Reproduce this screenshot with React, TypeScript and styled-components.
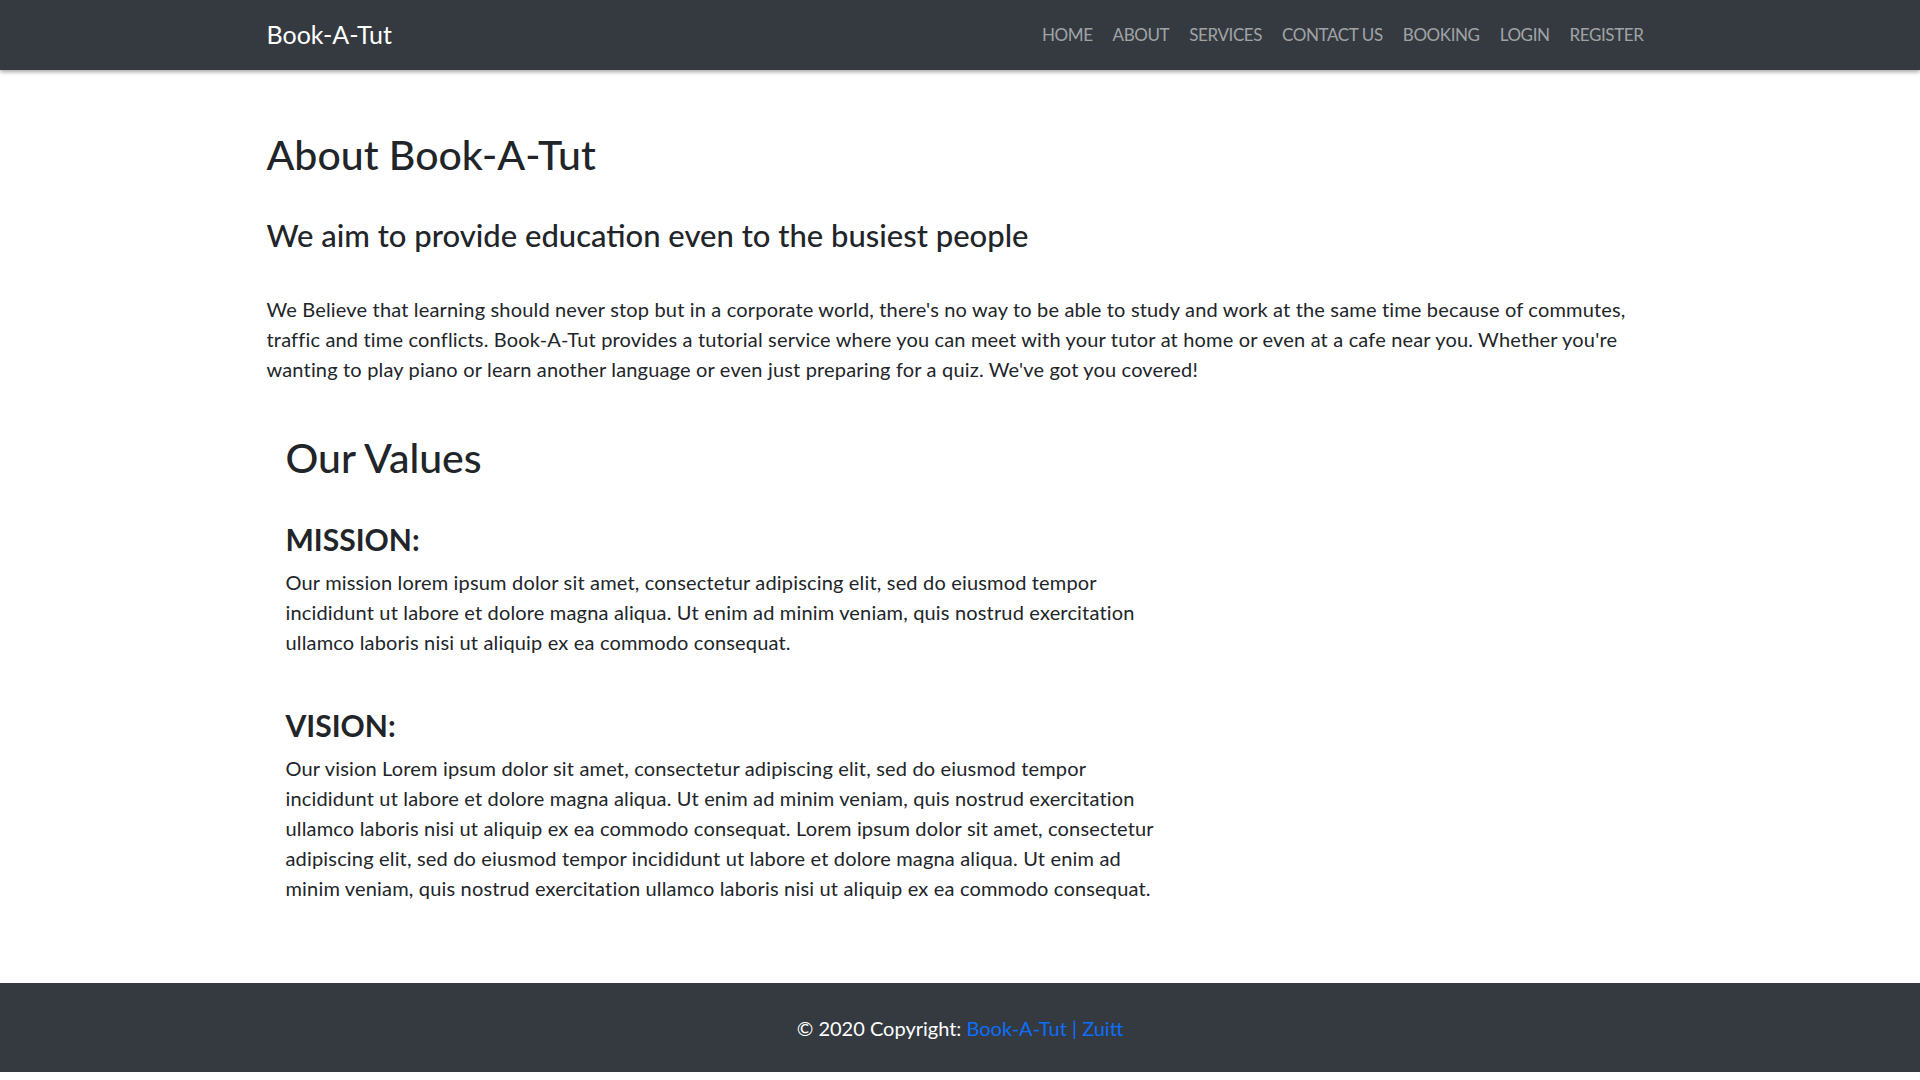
import { FC } from "react";
import styled, { createGlobalStyle } from "styled-components";

const GlobalStyle = createGlobalStyle`
  * {
    box-sizing: border-box;
  }

  body {
    margin: 0;
    background: #fff;
    color: #212529;
    font-family: Lato, "Open Sans", sans-serif;
    font-size: 20px;
    line-height: 1.5;
  }
`;

const Container = styled.div`
  width: 1387px;
  margin: 0 auto;
`;

const Navbar = styled.nav`
  height: 70px;
  background: #343a40;
  box-shadow: 0 2px 4px rgba(0, 0, 0, 0.35);
`;

const NavInner = styled(Container)`
  height: 100%;
  display: flex;
  align-items: center;
  justify-content: space-between;
`;

const Brand = styled.a`
  color: #fff;
  font-size: 25px;
  text-decoration: none;
`;

const NavList = styled.ul`
  display: flex;
  list-style: none;
  margin: 0;
  padding: 0;
`;

const NavLink = styled.a`
  display: block;
  padding: 0 10px;
  color: rgba(255, 255, 255, 0.55);
  font-size: 17px;
  letter-spacing: -0.4px;
  text-decoration: none;
  text-transform: uppercase;
`;

const Main = styled(Container)`
  padding: 61px 0 80px;
`;

const Title = styled.h1`
  margin: 0 0 38px;
  font-size: 41px;
  font-weight: 500;
  line-height: 48px;
`;

const Subtitle = styled.h4`
  margin: 0 0 41px;
  font-size: 31px;
  font-weight: 500;
  line-height: 36px;
`;

const Text = styled.p`
  margin: 0;
  line-height: 30px;
  letter-spacing: 0.17px;
`;

const Values = styled.section`
  width: 897px;
  margin-top: 50px;
  padding-left: 19px;
`;

const ValuesTitle = styled.h2`
  margin: 0 0 39px;
  font-size: 41px;
  font-weight: 500;
  line-height: 48px;
`;

const Value = styled.div`
  & + & {
    margin-top: 50px;
  }
`;

const ValueTitle = styled.h4`
  margin: 0 0 10px;
  font-size: 30px;
  font-weight: 700;
  line-height: 36px;
`;

const Footer = styled.footer`
  height: 89px;
  margin-bottom: 7px;
  display: flex;
  align-items: center;
  justify-content: center;
  background: #343a40;
  color: #fff;
`;

const FooterLink = styled.a`
  color: #0d6efd;
  text-decoration: none;
`;

const links = ["Home", "About", "Services", "Contact Us", "Booking", "Login", "Register"];

const values = [
  {
    title: "MISSION:",
    text: "Our mission lorem ipsum dolor sit amet, consectetur adipiscing elit, sed do eiusmod tempor incididunt ut labore et dolore magna aliqua. Ut enim ad minim veniam, quis nostrud exercitation ullamco laboris nisi ut aliquip ex ea commodo consequat.",
  },
  {
    title: "VISION:",
    text: "Our vision Lorem ipsum dolor sit amet, consectetur adipiscing elit, sed do eiusmod tempor incididunt ut labore et dolore magna aliqua. Ut enim ad minim veniam, quis nostrud exercitation ullamco laboris nisi ut aliquip ex ea commodo consequat. Lorem ipsum dolor sit amet, consectetur adipiscing elit, sed do eiusmod tempor incididunt ut labore et dolore magna aliqua. Ut enim ad minim veniam, quis nostrud exercitation ullamco laboris nisi ut aliquip ex ea commodo consequat.",
  },
];

const App: FC = () => {
  return (
    <>
      <GlobalStyle />
      <Navbar>
        <NavInner>
          <Brand href="#">Book-A-Tut</Brand>
          <NavList>
            {links.map((link) => (
              <li key={link}>
                <NavLink href="#">{link}</NavLink>
              </li>
            ))}
          </NavList>
        </NavInner>
      </Navbar>
      <Main>
        <Title>About Book-A-Tut</Title>
        <Subtitle>We aim to provide education even to the busiest people</Subtitle>
        <Text>
          We Believe that learning should never stop but in a corporate world, there's no way to be able to
          study and work at the same time because of commutes, traffic and time conflicts. Book-A-Tut provides a
          tutorial service where you can meet with your tutor at home or even at a cafe near you. Whether you're
          wanting to play piano or learn another language or even just preparing for a quiz. We've got you
          covered!
        </Text>
        <Values>
          <ValuesTitle>Our Values</ValuesTitle>
          {values.map((value) => (
            <Value key={value.title}>
              <ValueTitle>{value.title}</ValueTitle>
              <Text>{value.text}</Text>
            </Value>
          ))}
        </Values>
      </Main>
      <Footer>
        <span>
          © 2020 Copyright: <FooterLink href="#">Book-A-Tut | Zuitt</FooterLink>
        </span>
      </Footer>
    </>
  );
};

export default App;
